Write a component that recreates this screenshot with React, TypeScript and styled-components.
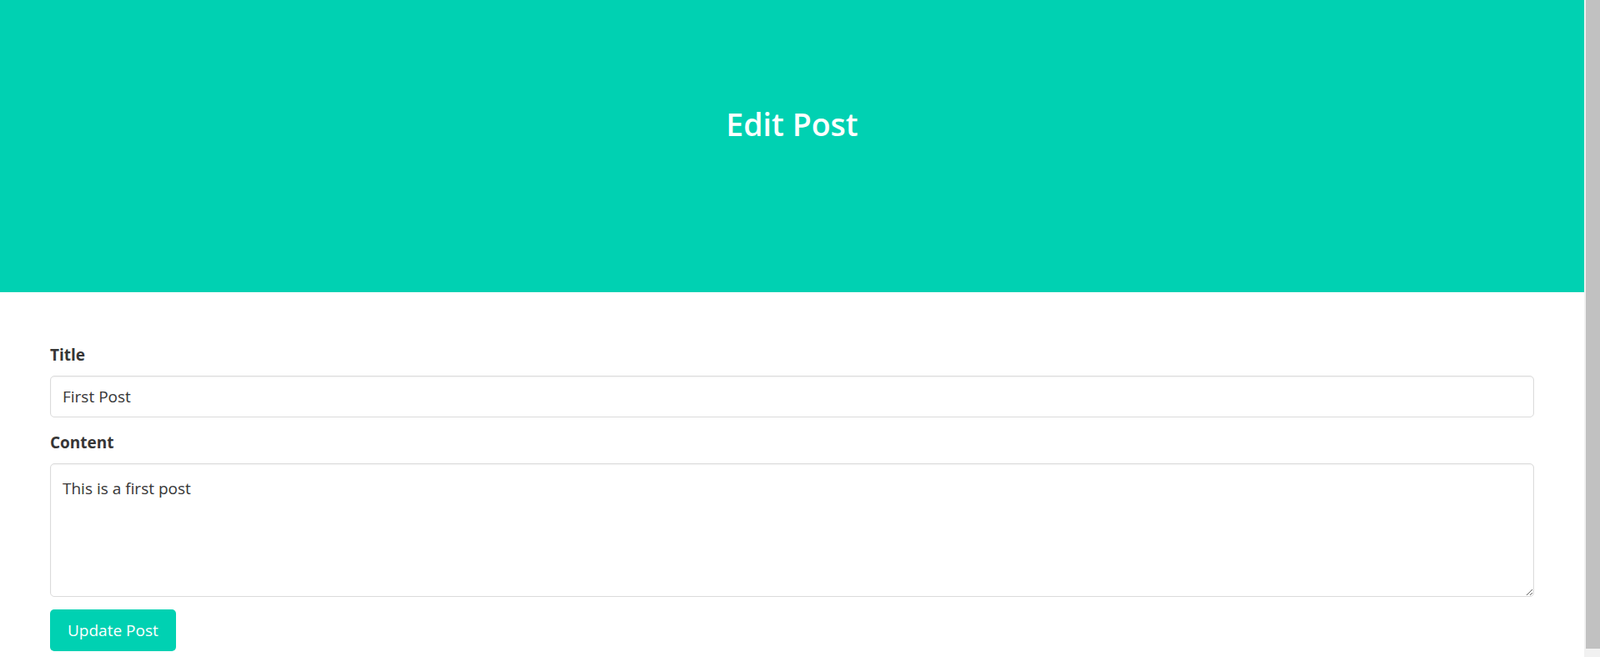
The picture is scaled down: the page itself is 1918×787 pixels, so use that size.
import React from "react";
import styled, { createGlobalStyle } from "styled-components";

const GlobalStyle = createGlobalStyle`
  html, body {
    height: 100%;
  }
  body {
    margin: 0;
    overflow: hidden;
    background: #ffffff;
    font-family: "Open Sans", "Noto Sans", "Liberation Sans", sans-serif;
    color: #363636;
  }
  #root {
    height: 100%;
  }
  * {
    box-sizing: border-box;
  }
`;

const Frame = styled.div`
  display: flex;
  height: 100%;
`;

const Page = styled.div`
  flex: 1;
  min-width: 0;
  overflow: hidden;
`;

const ScrollTrack = styled.div`
  width: 19px;
  flex: none;
  background: #f1f1f1;
  padding-left: 2px;
`;

const ScrollThumb = styled.div`
  height: 777px;
  background: #c1c1c1;
`;

const Hero = styled.header`
  height: 350px;
  background: #00d1b2;
  padding-top: 128px;
  text-align: center;
`;

const HeroTitle = styled.h1`
  margin: 0;
  color: #ffffff;
  font-size: 37.5px;
  font-weight: 600;
  line-height: 1.125;
`;

const Section = styled.main`
  padding: 60px 60px 16px;
`;

const Form = styled.form`
  display: flex;
  flex-direction: column;
`;

const Field = styled.div`
  margin-bottom: 15px;
`;

const Label = styled.label`
  display: block;
  margin-bottom: 10px;
  font-size: 19px;
  font-weight: 700;
  line-height: 30px;
  color: #363636;
`;

const Input = styled.input`
  display: block;
  width: 100%;
  height: 50px;
  padding: 0 14px;
  font-family: inherit;
  font-size: 19px;
  line-height: 30px;
  color: #363636;
  background: #ffffff;
  border: 1px solid #dbdbdb;
  border-radius: 5px;
  box-shadow: inset 0 1px 2px rgba(10, 10, 10, 0.05);
  outline: none;
`;

const TextArea = styled.textarea`
  display: block;
  width: 100%;
  height: 160px;
  padding: 14px;
  font-family: inherit;
  font-size: 19px;
  line-height: 30px;
  color: #363636;
  background: #ffffff;
  border: 1px solid #dbdbdb;
  border-radius: 5px;
  box-shadow: inset 0 1px 2px rgba(10, 10, 10, 0.05);
  resize: vertical;
  outline: none;
`;

const Button = styled.button`
  align-self: flex-start;
  height: 50px;
  padding: 0 20px;
  font-family: inherit;
  font-size: 19px;
  line-height: 30px;
  color: #ffffff;
  background: #00d1b2;
  border: 1px solid transparent;
  border-radius: 5px;
  cursor: pointer;
`;

export default function App() {
  return (
    <>
      <GlobalStyle />
      <Frame>
        <Page>
          <Hero>
            <HeroTitle>Edit Post</HeroTitle>
          </Hero>
          <Section>
            <Form onSubmit={(e) => e.preventDefault()}>
              <Field>
                <Label htmlFor="title">Title</Label>
                <Input id="title" type="text" defaultValue="First Post" />
              </Field>
              <Field>
                <Label htmlFor="content">Content</Label>
                <TextArea id="content" defaultValue="This is a first post" />
              </Field>
              <Button type="submit">Update Post</Button>
            </Form>
          </Section>
        </Page>
        <ScrollTrack aria-hidden="true">
          <ScrollThumb />
        </ScrollTrack>
      </Frame>
    </>
  );
}
